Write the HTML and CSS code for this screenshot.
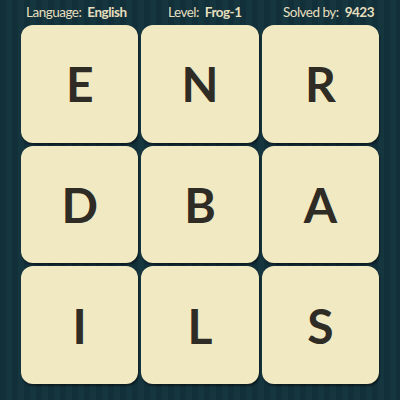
FILE: index.html
```html
<!DOCTYPE html>
<html>
<head>
<meta charset="utf-8">
<link rel="stylesheet" href="styles.css">
</head>
<body>
<div class="page">
  <div class="header">
    <div class="stat">Language: <b>English</b></div>
    <div class="stat">Level: <b>Frog-1</b></div>
    <div class="stat">Solved by: <b>9423</b></div>
  </div>
  <div class="grid">
    <div class="tile">E</div>
    <div class="tile">N</div>
    <div class="tile">R</div>
    <div class="tile">D</div>
    <div class="tile">B</div>
    <div class="tile">A</div>
    <div class="tile">I</div>
    <div class="tile">L</div>
    <div class="tile">S</div>
  </div>
</div>
</body>
</html>
```
FILE: styles.css
```css
html, body {
  margin: 0;
  padding: 0;
}
.page {
  width: 400px;
  height: 400px;
  overflow: hidden;
  background: repeating-linear-gradient(90deg, #12303a 0px, #12303a 6px, #16363f 6px, #16363f 12px);
  font-family: Lato, "Open Sans", sans-serif;
}
.header {
  height: 23px;
  display: flex;
  justify-content: space-between;
  align-items: center;
  padding: 0 26px 1px 26px;
  color: #e6dfbf;
  font-size: 13.5px;
  letter-spacing: -0.5px;
}
.stat b {
  font-weight: 700;
  margin-left: 3px;
}
.grid {
  display: grid;
  grid-template-columns: repeat(3, 117.4px);
  grid-template-rows: repeat(3, 117.7px);
  gap: 3px;
  padding-left: 21px;
  padding-top: 1px;
}
.tile {
  background: #f1e9c2;
  border-radius: 12px;
  box-shadow: 1px 2px 2px rgba(0, 0, 0, 0.45);
  display: flex;
  align-items: center;
  justify-content: center;
  color: #2f2b25;
  font-size: 48px;
  font-weight: 700;
}
```
